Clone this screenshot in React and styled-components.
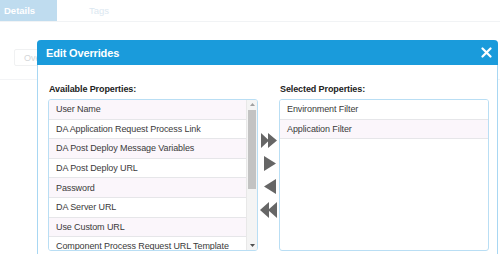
import React from "react";
import styled, { createGlobalStyle } from "styled-components";

const GlobalStyle = createGlobalStyle`
  html, body {
    margin: 0;
    padding: 0;
    background: #ffffff;
  }
  body {
    font-family: "Liberation Sans", Arial, sans-serif;
  }
`;

const available = [
  "User Name",
  "DA Application Request Process Link",
  "DA Post Deploy Message Variables",
  "DA Post Deploy URL",
  "Password",
  "DA Server URL",
  "Use Custom URL",
  "Component Process Request URL Template",
];

const selected = ["Environment Filter", "Application Filter"];

const App = () => {
  return (
    <Screen>
      <GlobalStyle />
      <Page>
        <TabBar>
          <Tab active>Details</Tab>
          <Tab>Tags</Tab>
        </TabBar>
        <Toolbar>
          <GhostButton>Ove</GhostButton>
        </Toolbar>
      </Page>

      <Modal>
        <ModalHeader>
          <ModalTitle>Edit Overrides</ModalTitle>
          <CloseButton aria-label="close">
            <svg width="11" height="11" viewBox="0 0 11 11">
              <path
                d="M1.5 1.5 L9.5 9.5 M9.5 1.5 L1.5 9.5"
                stroke="#fff"
                strokeWidth="2.2"
                strokeLinecap="round"
              />
            </svg>
          </CloseButton>
        </ModalHeader>
        <ModalBody>
          <Column>
            <ColumnLabel>Available Properties:</ColumnLabel>
            <ListBox>
              <Rows>
                {available.map((name, i) => (
                  <Row key={name} shaded={i % 2 === 0}>
                    {name}
                  </Row>
                ))}
              </Rows>
              <ScrollBar>
                <ScrollArrow>
                  <svg width="5" height="3" viewBox="0 0 5 3">
                    <path d="M0 3 L2.5 0 L5 3 Z" fill="#a0a0a0" />
                  </svg>
                </ScrollArrow>
                <ScrollTrack>
                  <ScrollThumb />
                </ScrollTrack>
                <ScrollArrow>
                  <svg width="5" height="3" viewBox="0 0 5 3">
                    <path d="M0 0 L5 0 L2.5 3 Z" fill="#505050" />
                  </svg>
                </ScrollArrow>
              </ScrollBar>
            </ListBox>
          </Column>

          <Mover>
            <MoveButton aria-label="add all">
              <svg width="16" height="15" viewBox="0 0 16 15">
                <path d="M0 0 L8 7.5 L0 15 Z M7 0 L16 7.5 L7 15 Z" fill="#666" />
              </svg>
            </MoveButton>
            <MoveButton aria-label="add">
              <svg width="16" height="15" viewBox="0 0 16 15">
                <path d="M3 0 L15 7.5 L3 15 Z" fill="#666" />
              </svg>
            </MoveButton>
            <MoveButton aria-label="remove">
              <svg width="16" height="15" viewBox="0 0 16 15">
                <path d="M15 0 L3 7.5 L15 15 Z" fill="#666" />
              </svg>
            </MoveButton>
            <MoveButton aria-label="remove all">
              <svg width="17" height="16" viewBox="0 0 17 16">
                <path d="M17 0 L8 8 L17 16 Z M9 0 L0 8 L9 16 Z" fill="#666" />
              </svg>
            </MoveButton>
          </Mover>

          <Column>
            <ColumnLabel>Selected Properties:</ColumnLabel>
            <ListBox>
              <Rows>
                {selected.map((name, i) => (
                  <Row key={name} shaded={i % 2 === 1}>
                    {name}
                  </Row>
                ))}
              </Rows>
            </ListBox>
          </Column>
        </ModalBody>
      </Modal>
    </Screen>
  );
};

const Screen = styled.div`
  position: relative;
  width: 500px;
  height: 254px;
  overflow: hidden;
  background: #ffffff;
`;

const Page = styled.div`
  display: flex;
  flex-direction: column;
`;

const TabBar = styled.div`
  display: flex;
  height: 21px;
  border-bottom: 1px solid #f1f3f5;
`;

const Tab = styled.div`
  width: ${(p) => (p.active ? "53px" : "auto")};
  padding: ${(p) => (p.active ? "0 0 0 4px" : "0 0 0 32px")};
  display: flex;
  align-items: center;
  background: ${(p) => (p.active ? "#bfdcef" : "transparent")};
  color: ${(p) => (p.active ? "#ffffff" : "#dce8f1")};
  font-size: 9.5px;
  font-weight: ${(p) => (p.active ? "bold" : "normal")};
`;

const Toolbar = styled.div`
  display: flex;
  align-items: flex-start;
  height: 30px;
  padding: 27px 0 0 14px;
  border-bottom: 1px solid #f3f4f6;
`;

const GhostButton = styled.div`
  width: 30px;
  height: 15px;
  padding-left: 9px;
  display: flex;
  align-items: center;
  white-space: nowrap;
  border: 1px solid #f0f1f2;
  border-radius: 2px;
  color: #d4d6d9;
  font-size: 9px;
`;

const Modal = styled.div`
  position: absolute;
  left: 37px;
  top: 40px;
  width: 461px;
  height: 230px;
  background: #ffffff;
  border: 1px solid #a8d7f3;
  border-top: none;
  border-radius: 4px 4px 0 0;
  box-sizing: border-box;
`;

const ModalHeader = styled.div`
  display: flex;
  align-items: center;
  justify-content: space-between;
  height: 25px;
  margin: 0 -1px;
  padding: 0 6px 0 9px;
  background: #1a9bdb;
  border-radius: 4px 4px 0 0;
`;

const ModalTitle = styled.div`
  color: #ffffff;
  font-size: 11px;
  font-weight: bold;
  letter-spacing: -0.15px;
`;

const CloseButton = styled.div`
  display: flex;
  align-items: center;
`;

const ModalBody = styled.div`
  display: flex;
  align-items: flex-start;
  padding: 19px 0 0 10px;
`;

const Column = styled.div`
  display: flex;
  flex-direction: column;
  width: 210px;
`;

const ColumnLabel = styled.div`
  height: 15px;
  padding-left: 1px;
  font-size: 9px;
  font-weight: bold;
  letter-spacing: -0.1px;
  color: #222;
`;

const ListBox = styled.div`
  display: flex;
  height: 152px;
  border: 1px solid #b9def4;
  border-radius: 3px;
  overflow: hidden;
  box-sizing: border-box;
`;

const Rows = styled.div`
  flex: 1;
  display: flex;
  flex-direction: column;
`;

const Row = styled.div`
  flex: none;
  height: 18.6px;
  padding-left: 7px;
  display: flex;
  align-items: center;
  border-bottom: 1px solid #e6e6e9;
  background: ${(p) => (p.shaded ? "#fbf6fb" : "#ffffff")};
  color: #3a3a3a;
  font-size: 9px;
  letter-spacing: -0.1px;
  white-space: nowrap;
`;

const ScrollBar = styled.div`
  width: 10px;
  display: flex;
  flex-direction: column;
  background: #f4f4f4;
  border-left: 1px solid #e8e8e8;
`;

const ScrollArrow = styled.div`
  height: 9px;
  display: flex;
  align-items: center;
  justify-content: center;
`;

const ScrollTrack = styled.div`
  flex: 1;
  padding: 1px 1px;
`;

const ScrollThumb = styled.div`
  height: 79px;
  background: #c3c3c3;
`;

const Mover = styled.div`
  width: 21px;
  display: flex;
  flex-direction: column;
  align-items: center;
  gap: 8px;
  padding-top: 49px;
`;

const MoveButton = styled.div`
  height: 15px;
  display: flex;
  align-items: center;
  justify-content: center;
`;

export default App;
